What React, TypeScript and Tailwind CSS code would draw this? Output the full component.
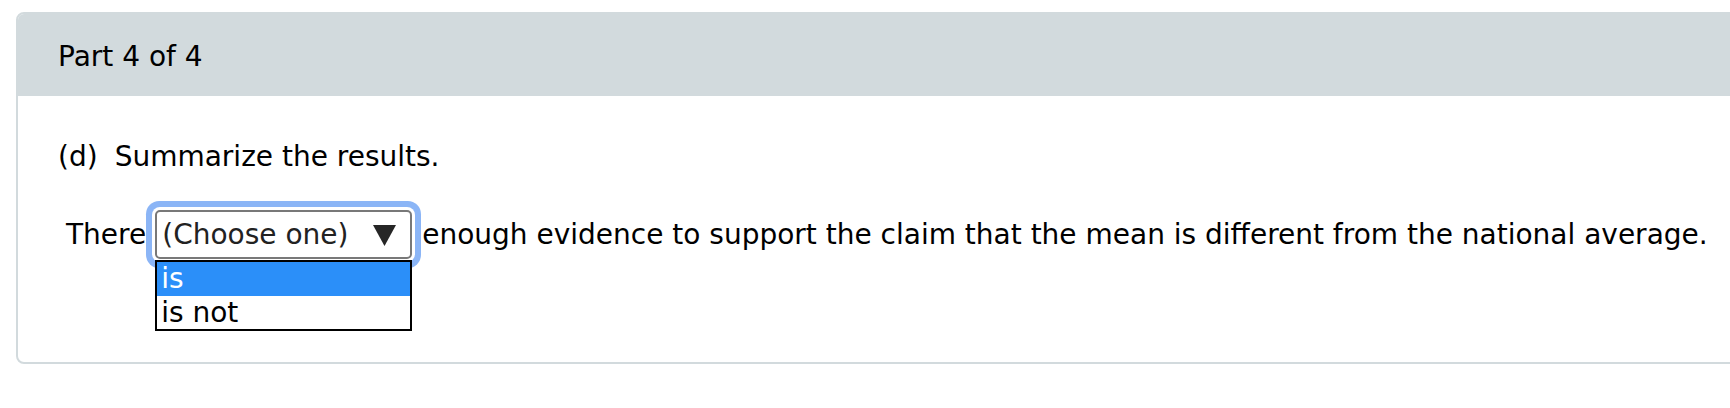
import React from 'react';

const font = { fontFamily: '"DejaVu Sans", Verdana, sans-serif' };

const SelectOpen = () => {
  const options = ['is', 'is not'];
  return (
    <div className="relative shrink-0">
      <div className="flex items-center justify-between w-[257px] h-[49px] pl-[5px] pr-[14px] bg-white border-2 border-[#787878] rounded-[5px] shadow-[0_0_0_3px_#ffffff,0_0_0_9px_#8bb5f6] text-[#222]">
        <span className="leading-[33px]">(Choose one)</span>
        <svg width="23" height="21" viewBox="0 0 23 21" className="mt-[1px]">
          <polygon points="0,0 23,0 11.5,21" fill="#262626" />
        </svg>
      </div>
      <div className="absolute left-0 top-[50px] w-[257px] bg-white border-2 border-black z-10">
        {options.map((opt, i) => (
          <div
            key={opt}
            className={
              i === 0
                ? 'h-[34px] leading-[34px] pl-[4px] bg-[#2b8ff9] text-white'
                : 'h-[33px] leading-[33px] pl-[4px] text-black'
            }
          >
            {opt}
          </div>
        ))}
      </div>
    </div>
  );
};

const App = () => {
  return (
    <div className="w-[1730px] h-[408px] overflow-hidden bg-white text-[28px] text-black" style={font}>
      <div className="mt-[12px] ml-[16px] w-[1730px] border-2 border-[#d2dadd] rounded-[8px] overflow-hidden">
        <div className="bg-[#d2dadd] pt-[26px] pb-[23px] px-[40px] leading-[33px]">
          Part 4 of 4
        </div>
        <div className="pt-[44px] pb-[103px] px-[40px]">
          <div className="flex leading-[33px]">
            <span>(d)</span>
            <span className="ml-[17px]">Summarize the results.</span>
          </div>
          <div className="flex items-center mt-[37px] pl-[8px] leading-[33px]">
            <span>There</span>
            <div className="ml-[9px] mr-[10px]">
              <SelectOpen />
            </div>
            <span className="whitespace-nowrap">
              enough evidence to support the claim that the mean is different from the national average.
            </span>
          </div>
        </div>
      </div>
    </div>
  );
};

export default App;
